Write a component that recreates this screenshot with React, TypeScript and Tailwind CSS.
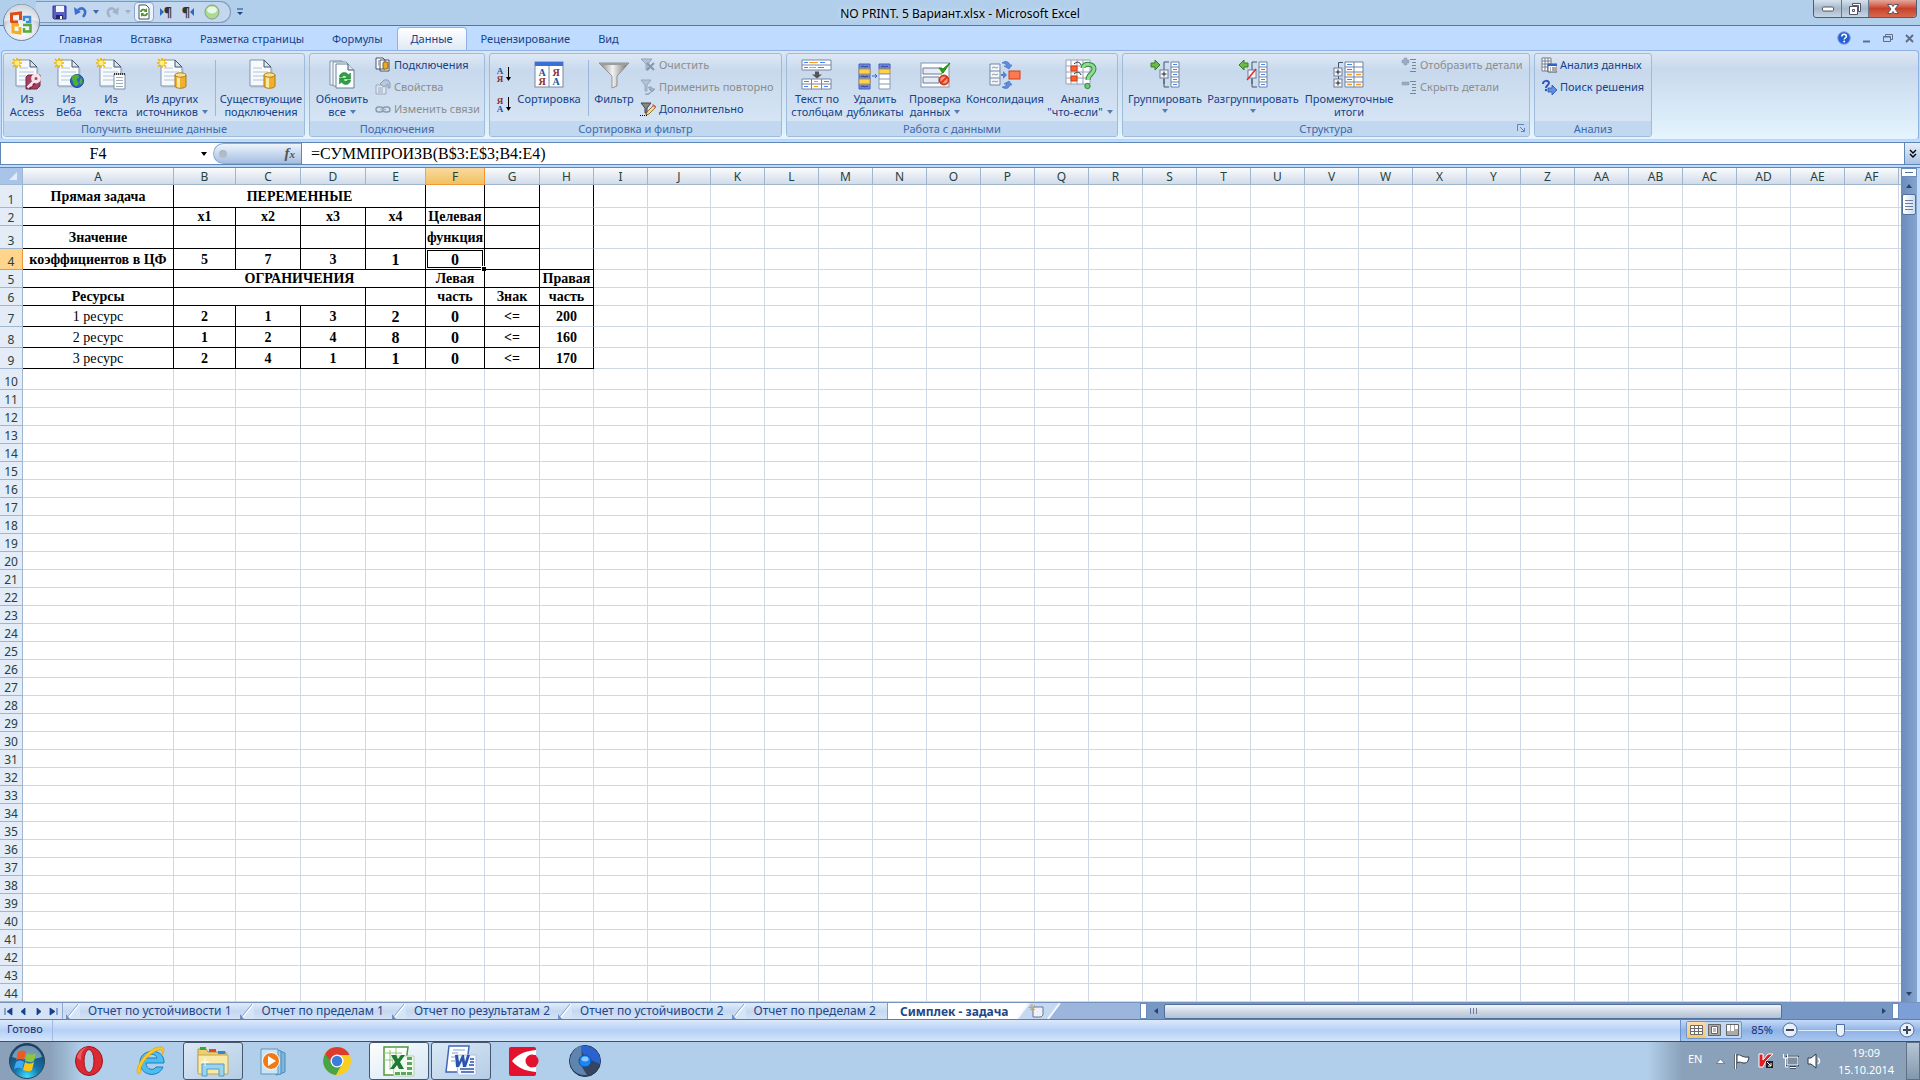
import React from 'react';
import clsx from 'clsx';

interface IconProps {
    className?: string;
}

/* ---------- Shared icon pieces ---------- */

const Page = () => (
    <>
        <path d="M6 4h14l7 7v19H6z" fill="#f7fafd" stroke="#7f93ab" />
        <path d="M20 4v7h7z" fill="#dce6f1" stroke="#44546a" />
        <path d="M9 12h9M9 16h15M9 20h15M9 24h15" stroke="#b4c4dc" />
        <path d="M7 31h21V12" fill="none" stroke="#9fb2c9" opacity=".6" />
    </>
);

const Spark = () => (
    <g>
        <path d="M7 2v10M2 7h10M3 3l8 8M11 3l-8 8" stroke="#f0b400" strokeWidth="1.6" />
        <circle cx="7" cy="7" r="2.4" fill="#fff27a" />
    </g>
);

const Cylinder = () => (
    <g>
        <path d="M20 19v11c0 3 11 3 11 0V19z" fill="#efb02b" stroke="#b07a12" />
        <path d="M22 20v11c1 .6 2 .8 3 .8V20z" fill="#fde9a4" />
        <ellipse cx="25.5" cy="19" rx="5.5" ry="2.2" fill="#fbe08a" stroke="#b07a12" />
    </g>
);

const AccessIcon = () => (
    <svg width="34" height="34" viewBox="0 0 34 34">
        <Page />
        <Spark />
        <path d="M18 19h12v11l-3 3H16V21z" fill="#a3415f" stroke="#7c2442" />
        <path d="M24 26l-6 6" stroke="#7c2442" strokeWidth="5" />
        <circle cx="26" cy="22.5" r="3.2" fill="none" stroke="#f6e3ea" strokeWidth="3.4" />
        <path d="M23.500 25.500l-6 6M20 28l2 2" stroke="#f6e3ea" strokeWidth="2.600" />
    </svg>
);

const WebIcon = () => (
    <svg width="34" height="34" viewBox="0 0 34 34">
        <Page />
        <Spark />
        <circle cx="25" cy="25" r="6.5" fill="#2c66bd" stroke="#1d468c" />
        <path d="M20 21c2-3 6-3 7-1s-2 2-2 4 3 2 1 5-5-1-5-3-2-2-1-5zM29 22c2 1 2 5 0 6s-2-4 0-6z" fill="#4fae3c" />
    </svg>
);

const TextFileIcon = () => (
    <svg width="34" height="34" viewBox="0 0 34 34">
        <Page />
        <Spark />
        <path d="M20 18h11v15H20z" fill="#fff" stroke="#7d8ca0" />
        <path d="M20 18h11" stroke="#333" strokeWidth="2" strokeDasharray="1 1" />
        <path d="M22 21.500h7M22 24.500h7M22 27.500h7M22 30.500h7" stroke="#9fadc0" />
    </svg>
);

const SourcesIcon = () => (
    <svg width="34" height="34" viewBox="0 0 34 34">
        <Page />
        <Spark />
        <Cylinder />
    </svg>
);

const ConnectionsBigIcon = () => (
    <svg width="34" height="34" viewBox="0 0 34 34">
        <Page />
        <Cylinder />
    </svg>
);

const RefreshArrows = () => (
    <>
        <path d="M-5-1c0-5 7-6 9-2l2-2v6h-6l2-2c-2-2-4-1-4 0z" fill="#2fa043" stroke="#157a2a" strokeWidth=".5" />
        <path d="M6 2c0 5-7 6-9 2l-2 2V0h6L-1 2c2 2 4 1 4 0z" fill="#2fa043" stroke="#157a2a" strokeWidth=".5" />
    </>
);

const RefreshAllIcon = () => (
    <svg width="34" height="34" viewBox="0 0 34 34">
        <path d="M5 5h12l4 4v20H5z" fill="#f1f5fa" stroke="#7f93ab" />
        <path d="M8 6h13l4 4v20H8z" fill="#f4f8fc" stroke="#7f93ab" />
        <path d="M11 8h12l6 6v18H11z" fill="#fbfdff" stroke="#6d809a" />
        <path d="M23 8v6h6" fill="#dce6f1" stroke="#44546a" />
        <g transform="translate(19.5 22)">
            <RefreshArrows />
        </g>
    </svg>
);

const SortIcon = () => (
    <svg width="34" height="34" viewBox="0 0 34 34">
        <rect x="3" y="6" width="28" height="25" fill="#fff" stroke="#7688a5" />
        <rect x="3" y="6" width="28" height="4" fill="#3c6fd6" />
        <path d="M17 10v21" stroke="#7688a5" />
        <g fontFamily="Liberation Serif" fontSize="10" fontWeight="bold" textAnchor="middle">
            <text x="10" y="20" fill="#25539c">А</text>
            <text x="10" y="29" fill="#8b2c34">Я</text>
            <text x="24" y="20" fill="#8b2c34">Я</text>
            <text x="24" y="29" fill="#25539c">А</text>
        </g>
    </svg>
);

const SortLetters: React.FC<{ reverse?: boolean }> = ({ reverse = false }) => (
    <svg width="18" height="20" viewBox="0 0 18 20">
        <g fontFamily="Liberation Serif" fontSize="9" fontWeight="bold" textAnchor="middle">
            <text x="5" y="10" fill={reverse ? '#8b2c34' : '#25539c'}>{reverse ? 'Я' : 'А'}</text>
            <text x="5" y="18" fill={reverse ? '#25539c' : '#8b2c34'}>{reverse ? 'А' : 'Я'}</text>
        </g>
        <path d="M13.500 3v11" stroke="#000" />
        <path d="M11 13h5l-2.500 4z" fill="#000" />
    </svg>
);

const FilterIcon = () => (
    <svg width="34" height="34" viewBox="0 0 34 34">
        <defs>
            <linearGradient id="funnel">
                <stop offset="0" stopColor="#7e7e7e" />
                <stop offset=".45" stopColor="#f2f2f2" />
                <stop offset="1" stopColor="#6c6c6c" />
            </linearGradient>
        </defs>
        <path d="M2 7h30L20 20v10l-5 2V20z" fill="url(#funnel)" stroke="#777" strokeWidth=".7" />
        <path d="M2 7h30l-2 2H4z" fill="#9c9c9c" />
    </svg>
);

const TextColumnsIcon = () => (
    <svg width="34" height="34" viewBox="0 0 34 34">
        <path d="M2 4h29v10H2zM2 9h29" fill="#fff" stroke="#7486a2" />
        <path d="M4 6.500h4M20 6.500h5M4 11.500h4M18 11.500h6" stroke="#4a86f0" />
        <path d="M9 6.500h9M9 11.500h7" stroke="#ff9a1f" />
        <path d="M15 15.500h4v3h3l-5 4-5-4h3z" fill="#555" />
        <path d="M2 23h29v10H2zM2 28h29M11.500 23v10M21.500 23v10" fill="#fff" stroke="#7486a2" />
        <path d="M4 25.500h5M24 25.500h5M4 30.500h4M24 30.500h4" stroke="#4a86f0" />
        <path d="M14 25.500h4M14 30.500h4" stroke="#ff9a1f" />
    </svg>
);

const DuplicatesIcon = () => (
    <svg width="34" height="34" viewBox="0 0 34 34">
        <path d="M1 8h11v25H1zM21 8h11v5H21z" fill="#6f8be0" stroke="#4560b8" />
        <path d="M1 13h11v5H1zM1 23h11v5H1zM21 13h11v5H21z" fill="#ffd24a" stroke="#b9963c" />
        <path d="M21 18h11v15H21zM21 23h11M21 28h11" fill="#fff" stroke="#8899b5" />
        <path d="M3 11l2-1 2 1 2-1 1 1M3 21l2-1 2 1 2-1 1 1M3 31l2-1 2 1 2-1 1 1M23 11l2-1 2 1 2-1 1 1" fill="none" stroke="#2b3f94" />
        <path d="M14 20h4M17 18l2 2-2 2" fill="none" stroke="#3566c9" />
    </svg>
);

const ValidationIcon = () => (
    <svg width="34" height="34" viewBox="0 0 34 34">
        <rect x="3" y="7" width="28" height="24" fill="#fbfcfe" stroke="#8494ab" />
        <path d="M5 12h19v6H5zM5 21h16v6H5z" fill="#e6ebf5" stroke="#6c7c97" />
        <path d="M21 12l4 5 7-10-7 6z" fill="#2aa313" stroke="#1d8a0c" />
        <circle cx="26" cy="24" r="4.500" fill="#ff9b85" stroke="#d6381b" strokeWidth="1.800" />
        <path d="M23 27l6-6" stroke="#d6381b" strokeWidth="1.800" />
    </svg>
);

const ConsolidateIcon = () => (
    <svg width="34" height="34" viewBox="0 0 34 34">
        <path d="M2 8h10v21H2zM2 15h10M2 22h10" fill="#f3f6fb" stroke="#7486a2" />
        <path d="M4 12l2-1 2 1 2-1M4 19l2-1 2 1 2-1M4 26l2-1 2 1 2-1" fill="none" stroke="#8a98ae" />
        <rect x="21" y="15" width="11" height="8" fill="#ff7a52" stroke="#d03c17" />
        <path d="M13 18h2v-3l4 4-4 4v-3h-2z" fill="#4e83dc" />
        <path d="M14 7c4-3 7-1 8 2h2l-3 4-5-3h3c-1-2-3-3-5-3zM14 31c4 3 7 1 8-2h2l-3-4-5 3h3c-1 2-3 3-5 3z" fill="#5d8ce0" stroke="#3c68bd" strokeWidth=".6" />
    </svg>
);

const WhatIfIcon = () => (
    <svg width="34" height="34" viewBox="0 0 34 34">
        <path d="M3 4h24v24H3zM8 4v24M14 4v24M20 4v24M3 10h24M3 16h24M3 22h24" fill="#fdfdff" stroke="#96a3b8" />
        <path d="M8 10h6v5H8zM8 20h6v5H8z" fill="#ff6030" stroke="#cc3c12" />
        <path d="M11 8c3-3 6-2 7 1M11 18c3-3 6-2 7 1" fill="none" stroke="#333" />
        <path d="M20 12c0-5 11-5 11 1 0 5-6 5-6 11" fill="none" stroke="#2c8a3d" strokeWidth="5" />
        <path d="M20 12c0-5 11-5 11 1 0 5-6 5-6 11" fill="none" stroke="#8fdc90" strokeWidth="3" />
        <circle cx="24.500" cy="30" r="2.700" fill="#6cc76f" stroke="#2c8a3d" />
    </svg>
);

const GroupIcon: React.FC<{ ungroup?: boolean }> = ({ ungroup = false }) => (
    <svg width="34" height="34" viewBox="0 0 34 34">
        <path d="M23 6h8v25h-8zM23 11h8M23 16h8M23 21h8M23 26h8" fill="#fff" stroke="#6f81a0" />
        <path d="M25 8.500h4M25 13.500h4M25 18.500h4M25 23.500h4M25 28.500h4" stroke="#4a86f0" />
        <path d="M21 6h-5v22M21 31h-5v-8" fill="none" stroke="#44546a" />
        <rect x="12" y="14" width="8" height="8" fill="#f3f6fa" stroke="#6c7c97" />
        {ungroup ? (
            <>
                <path d="M11 24l9-11" stroke="#e22b2b" strokeWidth="1.500" />
                <path d="M3 9l5-5v3h4v4H8v3z" fill="#6cba4c" stroke="#35801d" />
            </>
        ) : (
            <>
                <path d="M13.500 18h5M16 15.500v5" stroke="#222" />
                <path d="M12 9L7 4v3H3v4h4v3z" fill="#6cba4c" stroke="#35801d" />
            </>
        )}
    </svg>
);

const SubtotalIcon = () => (
    <svg width="34" height="34" viewBox="0 0 34 34">
        <path d="M13 6h18v25H13zM22 6v25M13 11h18M13 16h18M13 21h18M13 26h18" fill="#fff" stroke="#6f81a0" />
        <path d="M15 8.500h5M15 13.500h5M15 23.500h5" stroke="#4a86f0" />
        <path d="M15 18.500h5M24 18.500h5M15 28.500h5M24 28.500h5" stroke="#ff9a1f" strokeWidth="1.500" />
        <path d="M11 6.500H6.500V31" fill="none" stroke="#44546a" />
        <rect x="2" y="12" width="8" height="8" fill="#f3f6fa" stroke="#6c7c97" />
        <rect x="2" y="23" width="8" height="8" fill="#f3f6fa" stroke="#6c7c97" />
        <path d="M3.500 16h5M6 13.500v5M3.500 27h5M6 24.500v5" stroke="#222" />
    </svg>
);

/* ---------- 16px icons ---------- */

const LinkDocIcon = () => (
    <svg width="16" height="16" viewBox="0 0 16 16">
        <path d="M1 1h7l2 2v9H1zM5 3h9v11H5z" fill="#fff" stroke="#44546a" />
        <rect x="8" y="5" width="5" height="7" rx="1" fill="#e9a92b" stroke="#8b6310" />
        <path d="M3 4h1M3 6h1M3 8h1" stroke="#5d7fb8" />
    </svg>
);

const PropertiesIcon = () => (
    <svg width="16" height="16" viewBox="0 0 16 16">
        <path d="M1 6h10v9H1z" fill="#dfe7f2" stroke="#9aa8bc" />
        <path d="M3 9h5M3 11h5M3 13h5" stroke="#9aa8bc" />
        <path d="M5 5l4-4h4l2 3v5h-2V5l-4 3z" fill="#b9c8dd" stroke="#8e9db3" />
    </svg>
);

const EditLinksIcon = () => (
    <svg width="16" height="16" viewBox="0 0 16 16">
        <rect x="1" y="6" width="7" height="5" rx="2.500" fill="none" stroke="#8d9bb2" strokeWidth="1.500" />
        <rect x="8" y="6" width="7" height="5" rx="2.500" fill="none" stroke="#8d9bb2" strokeWidth="1.500" />
        <path d="M5 8.500h6" stroke="#a9b6ca" strokeWidth="1.500" />
    </svg>
);

const ClearIcon = () => (
    <svg width="16" height="16" viewBox="0 0 16 16">
        <path d="M1 2h11L8 7v6H6V7z" fill="#b5c2d6" stroke="#96a5bc" />
        <path d="M7 6l7 7M14 6l-7 7" stroke="#8796b2" strokeWidth="2" />
    </svg>
);

const ReapplyIcon = () => (
    <svg width="16" height="16" viewBox="0 0 16 16">
        <path d="M1 1h10L7 6v6H5V6z" fill="#b5c2d6" stroke="#96a5bc" />
        <path d="M8 9c2-2 4-1 5 1h2l-3 3-3-3h2M5 15c3 1 5 0 6-2" fill="#9fb0cc" stroke="#8c9cb8" />
    </svg>
);

const AdvancedIcon = () => (
    <svg width="16" height="16" viewBox="0 0 16 16">
        <path d="M1 2h10L7 7v5H5V7z" fill="#888" stroke="#444" />
        <path d="M14 4l2 2-7 7-3 1 1-3z" fill="#f7d98c" stroke="#7d5a1c" strokeWidth=".8" />
        <path d="M13 3l3 3-1 1-3-3z" fill="#d9655c" />
        <path d="M0 14.500h7" stroke="#000" strokeDasharray="1 1" />
    </svg>
);

const DetailIcon: React.FC<{ plus?: boolean }> = ({ plus = false }) => (
    <svg width="16" height="16" viewBox="0 0 16 16">
        <path d="M9 2.500h6M11 5.500h4M11 8.500h4M11 11.500h4M9 14.500h6" stroke="#77859c" />
        <path d={plus ? 'M3 1h3v2h2v3H6v2H3V6H1V3h2z' : 'M1 3h7v3H1z'} fill="#9babc4" stroke="#8999b3" strokeWidth=".5" />
    </svg>
);

const DataAnalysisIcon = () => (
    <svg width="16" height="16" viewBox="0 0 16 16">
        <path d="M1 1h9v13H1zM4 1v13M7 1v13M1 4h9M1 7h9M1 10h9" fill="#fff" stroke="#707c8f" />
        <path d="M7 7h9v8H7z" fill="#fff" stroke="#44546a" />
        <path d="M7 8h9" stroke="#2f62c9" strokeWidth="2" />
        <path d="M9 11h1M11 11h4M9 13h1M11 13h4" stroke="#555" />
    </svg>
);

const SolverIcon = () => (
    <svg width="16" height="16" viewBox="0 0 16 16">
        <path d="M2 5c0-4 6-4 6-1 0 2-3 2-3 5" fill="none" stroke="#2c55c0" strokeWidth="2" />
        <circle cx="5" cy="11" r="1.200" fill="#2c55c0" />
        <path d="M7 9h4V6l5 5-5 5v-3H7z" fill="#5f8fe6" stroke="#2a50a8" strokeWidth=".8" />
    </svg>
);

const Arrow: React.FC<IconProps> = ({ className }) => (
    <svg width="6" height="4" viewBox="0 0 6 4" className={clsx('inline-block', className)}>
        <path d="M0 0h6L3 4z" fill="currentColor" />
    </svg>
);

/* ---------- Title bar ---------- */

const OfficeButton = () => (
    <button aria-label="Office" className="absolute left-[2px] top-[3px] z-10">
        <svg width="40" height="40" viewBox="0 0 40 40">
            <defs>
                <radialGradient id="orb" cx=".5" cy=".75" r=".7">
                    <stop offset="0" stopColor="#ffffff" />
                    <stop offset=".6" stopColor="#dde2ea" />
                    <stop offset="1" stopColor="#9aa7ba" />
                </radialGradient>
            </defs>
            <circle cx="19.500" cy="19.500" r="18" fill="url(#orb)" stroke="#6f83a0" />
            <path d="M2 19a17.500 17.500 0 0 1 35 0c-8-4-27-4-35 0z" fill="#fff" opacity=".55" />
            <g fill="none" strokeWidth="3">
                <path d="M16 19h-5.500a1 1 0 0 1-1-1v-7l9-1v7" stroke="#dc4a16" />
                <path d="M22 18v-4h6v5h-4" stroke="#3d8ad6" strokeWidth="2.500" />
                <path d="M17 22h-6v7l7 1v-6" stroke="#f5ad1c" />
                <path d="M21 22h7.500v6.500H22V25" stroke="#58a83a" strokeWidth="2.500" />
            </g>
        </svg>
    </button>
);

const QuickAccess = () => (
    <div className="flex h-6 items-center pl-9">
        <div className="flex h-[22px] items-center rounded-r-full border border-l-0 border-[#7f98b8] bg-[#c3d8ee] pl-4 pr-2 text-[#3f68a5]">
            <button aria-label="Сохранить" className="w-4">
                <svg width="15" height="15" viewBox="0 0 15 15">
                    <path d="M1 1h13v13H2l-1-1z" fill="#5a5fc4" stroke="#2f3490" />
                    <path d="M4 1h8v6H4z" fill="#f2f5ff" />
                    <path d="M4 10h7v4H4z" fill="#222a66" />
                    <path d="M8 11h2v3H8z" fill="#fff" />
                </svg>
            </button>
            <button aria-label="Отменить" className="ml-1.5 w-4">
                <svg width="14" height="14" viewBox="0 0 14 14">
                    <path d="M4 5c5-4 10 1 5 7" fill="none" stroke="#3a6fd0" strokeWidth="2.600" />
                    <path d="M0 2l1 8 6-3z" fill="#3a6fd0" />
                </svg>
            </button>
            <button aria-label="Список отмены" className="flex w-3 justify-center"><Arrow /></button>
            <button aria-label="Вернуть" className="flex w-5 justify-center">
                <svg width="14" height="14" viewBox="0 0 14 14">
                    <path d="M10 5C5 1 0 6 5 12" fill="none" stroke="#a3b2c8" strokeWidth="2.600" />
                    <path d="M14 2l-1 8-6-3z" fill="#a3b2c8" />
                </svg>
            </button>
            <button aria-label="Список возврата" className="flex w-3 justify-center text-[#a0b0c6]"><Arrow /></button>
            <button aria-label="Обновить" className="flex h-5 w-5 items-center justify-center rounded-sm border border-[#8aa6cc] bg-[#eaf2fb]">
                <svg width="14" height="16" viewBox="0 0 14 16">
                    <path d="M2 1h7l3 3v11H2z" fill="#fff" stroke="#44546a" />
                    <path d="M4 8c0-3 4-3 5-1M10 9c0 3-4 3-5 1" fill="none" stroke="#4a9b20" strokeWidth="1.800" />
                    <path d="M10 4v4H7zM4 13V9h3z" fill="#4a9b20" />
                </svg>
            </button>
            <button aria-label="Слева направо" className="flex w-6 items-center justify-center text-[13px] font-bold leading-4 text-[#333]">
                <svg width="4" height="8" viewBox="0 0 4 8"><path d="M0 0l4 4-4 4z" fill="#2d68c0" /></svg>
                ¶
            </button>
            <button aria-label="Справа налево" className="flex w-5 items-center justify-center text-[13px] font-bold leading-4 text-[#333]">
                ¶
                <svg width="4" height="8" viewBox="0 0 4 8"><path d="M4 0L0 4l4 4z" fill="#2d68c0" /></svg>
            </button>
            <button aria-label="Фигура" className="ml-1 flex w-5 justify-center">
                <svg width="16" height="16" viewBox="0 0 16 16">
                    <circle cx="8" cy="8" r="7" fill="#a8dc93" stroke="#8a9a88" />
                    <ellipse cx="8" cy="6" rx="5" ry="3.500" fill="#e9f8e2" />
                </svg>
            </button>
        </div>
        <button aria-label="Настройка панели" className="ml-1.5 text-[#1f4788]">
            <svg width="6" height="8" viewBox="0 0 6 8">
                <path d="M0 1h6" stroke="currentColor" />
                <path d="M0 4h6L3 7z" fill="currentColor" />
            </svg>
        </button>
    </div>
);

const TitleBar = () => (
    <header className="grid h-[26px] grid-cols-[1fr_auto_1fr] items-start border-b border-[#55789c] bg-[#b1ceea]">
        <QuickAccess />
        <h1 className="pt-1 text-[12px] leading-5 text-black [text-shadow:0_0_6px_#fff]">NO PRINT. 5 Вариант.xlsx - Microsoft Excel</h1>
        <div className="mr-[3px] flex h-[18px] justify-self-end overflow-hidden rounded-b-[4px] border border-t-0 border-[#4d5d70]">
            <button aria-label="Свернуть" className="flex w-[28px] items-center justify-center border-r border-[#66788d] bg-linear-to-b from-[#d6e2ee] via-[#a8b8ca] to-[#c6d5e4]">
                <svg width="12" height="6" viewBox="0 0 12 6"><rect x=".5" y="1" width="11" height="4" rx="1" fill="#fff" stroke="#535666" /></svg>
            </button>
            <button aria-label="Восстановить" className="flex w-[27px] items-center justify-center border-r border-[#66788d] bg-linear-to-b from-[#d6e2ee] via-[#a8b8ca] to-[#c6d5e4]">
                <svg width="12" height="12" viewBox="0 0 12 12">
                    <path d="M3.500.5h8v8h-2v-6h-6z" fill="#fff" stroke="#535666" />
                    <path d="M.5 3.500h8v8h-8zM3.500 6.500h2v2h-2z" fill="#fff" stroke="#535666" />
                </svg>
            </button>
            <button aria-label="Закрыть" className="flex w-[47px] items-center justify-center bg-linear-to-b from-[#e4a79c] via-[#c8402a] to-[#d66a4c]">
                <svg width="12" height="10" viewBox="0 0 12 10">
                    <path d="M.5.5h4L6 2.500 7.500.5h4L8 5l3.500 4.500h-4L6 7.500 4.500 9.500h-4L4 5z" fill="#fff" stroke="#535666" />
                </svg>
            </button>
        </div>
    </header>
);

/* ---------- Ribbon ---------- */

const TABS = ['Главная', 'Вставка', 'Разметка страницы', 'Формулы', 'Данные', 'Рецензирование', 'Вид'];

const TabRow = () => (
    <nav className="flex h-[24px] items-end bg-[#bfdbff] pl-[45px] text-[11px] leading-4 text-[#15428b]">
        {TABS.map((tab) => (
            <button
                key={tab}
                className={clsx(
                    'h-[23px] rounded-t-[4px] px-[13px]',
                    tab === 'Данные'
                        ? 'border border-b-0 border-[#8db2e3] bg-linear-to-b from-white to-[#dfe9f5]'
                        : 'border border-b-0 border-transparent'
                )}
            >
                {tab}
            </button>
        ))}
        <div className="ml-auto flex h-full items-center gap-3 pr-[6px] text-[#5f6f86]">
            <button aria-label="Справка">
                <svg width="14" height="14" viewBox="0 0 14 14">
                    <circle cx="7" cy="7" r="6.300" fill="#2460d4" stroke="#8aa5d8" />
                    <path d="M4.800 5.500c0-3 4.600-3 4.600 0 0 1.500-2.200 1.500-2.200 3" fill="none" stroke="#fff" strokeWidth="1.500" />
                    <circle cx="7.200" cy="10.500" r="1" fill="#fff" />
                </svg>
            </button>
            <button aria-label="Свернуть книгу">
                <svg width="8" height="10" viewBox="0 0 8 10"><path d="M0 8.500h7" stroke="currentColor" strokeWidth="2" /></svg>
            </button>
            <button aria-label="Восстановить книгу">
                <svg width="10" height="8" viewBox="0 0 10 8">
                    <path d="M2.500 2V.5h7v5H8M.5 2.500h7v5h-7z" fill="none" stroke="currentColor" />
                    <path d="M0 3h8" stroke="currentColor" />
                </svg>
            </button>
            <button aria-label="Закрыть книгу">
                <svg width="9" height="9" viewBox="0 0 9 9"><path d="M1 1l7 7M8 1L1 8" stroke="currentColor" strokeWidth="2" /></svg>
            </button>
        </div>
    </nav>
);

interface BigButtonProps {
    icon: React.ReactNode;
    lines: string[];
    width: string;
    arrow?: boolean;
}

const BigButton: React.FC<BigButtonProps> = ({ icon, lines, width, arrow = false }) => (
    <button className={clsx('flex shrink-0 flex-col items-center whitespace-nowrap pt-[2px]', width)}>
        {icon}
        <span className="mt-[2px] leading-[13px]">{lines[0]}</span>
        <span className="flex items-center gap-1 leading-[13px]">
            {lines[1]}
            {arrow && <Arrow className={clsx('text-[#567db1]', !lines[1] && 'mt-1')} />}
        </span>
    </button>
);

interface SmallButtonProps {
    icon: React.ReactNode;
    label: string;
    disabled?: boolean;
}

const SmallButton: React.FC<SmallButtonProps> = ({ icon, label, disabled = false }) => (
    <button disabled={disabled} className={clsx('flex h-[22px] items-center gap-[3px] whitespace-nowrap', disabled && 'text-[#8d8d8d]')}>
        {icon}
        {label}
    </button>
);

const Separator = () => <div className="mx-[3px] mt-[6px] h-[56px] w-px shrink-0 bg-[#9ab6d9]" />;

interface GroupProps {
    title: string;
    width: string;
    launcher?: boolean;
    children: React.ReactNode;
}

const Group: React.FC<GroupProps> = ({ title, width, launcher = false, children }) => (
    <section
        className={clsx(
            'flex shrink-0 flex-col overflow-hidden rounded-[3px] border border-[#9ebbdc] bg-linear-to-b from-[#dee8f5] from-0% via-[#c8d9ed] via-20% to-[#d9e8f6]',
            width
        )}
    >
        <div className="flex h-[67px] px-[2px]">{children}</div>
        <div className="relative h-[15px] bg-[#c1d8f0] text-center leading-4 text-[#3e6aaa]">
            {title}
            {launcher && (
                <svg width="8" height="8" viewBox="0 0 8 8" className="absolute right-1 top-[3px]">
                    <path d="M.5 7V.5H7M3 3l4 4M7.500 4v3.500H4" fill="none" stroke="#5f86b8" />
                </svg>
            )}
        </div>
    </section>
);

const Ribbon = () => (
    <div className="bg-[#bfdbff] px-[1px] pb-[2px]">
        <div className="flex h-[90px] gap-[4px] rounded-[4px] border border-[#8db2e3] border-b-[#a5e0ee] bg-linear-to-b from-[#dde7f3] from-0% via-[#c8d9ed] via-20% to-[#e4f5fe] px-[1px] py-[2px] text-[11px] text-[#15428b]">
            <Group title="Получить внешние данные" width="w-[302px]">
                <BigButton icon={<AccessIcon />} lines={['Из', 'Access']} width="w-[42px]" />
                <BigButton icon={<WebIcon />} lines={['Из', 'Веба']} width="w-[42px]" />
                <BigButton icon={<TextFileIcon />} lines={['Из', 'текста']} width="w-[42px]" />
                <BigButton icon={<SourcesIcon />} lines={['Из других', 'источников']} width="w-[80px]" arrow />
                <Separator />
                <BigButton icon={<ConnectionsBigIcon />} lines={['Существующие', 'подключения']} width="w-[84px]" />
            </Group>
            <Group title="Подключения" width="w-[176px]">
                <BigButton icon={<RefreshAllIcon />} lines={['Обновить', 'все']} width="w-[60px]" arrow />
                <div className="pl-[3px]">
                    <SmallButton icon={<LinkDocIcon />} label="Подключения" />
                    <SmallButton icon={<PropertiesIcon />} label="Свойства" disabled />
                    <SmallButton icon={<EditLinksIcon />} label="Изменить связи" disabled />
                </div>
            </Group>
            <Group title="Сортировка и фильтр" width="w-[293px]">
                <div className="flex flex-col gap-[10px] pl-[3px] pt-[10px]">
                    <button aria-label="Сортировка от А до Я"><SortLetters /></button>
                    <button aria-label="Сортировка от Я до А"><SortLetters reverse /></button>
                </div>
                <BigButton icon={<SortIcon />} lines={['Сортировка']} width="w-[72px]" />
                <Separator />
                <BigButton icon={<FilterIcon />} lines={['Фильтр']} width="w-[44px]" />
                <div className="pl-[4px]">
                    <SmallButton icon={<ClearIcon />} label="Очистить" disabled />
                    <SmallButton icon={<ReapplyIcon />} label="Применить повторно" disabled />
                    <SmallButton icon={<AdvancedIcon />} label="Дополнительно" />
                </div>
            </Group>
            <Group title="Работа с данными" width="w-[332px]">
                <BigButton icon={<TextColumnsIcon />} lines={['Текст по', 'столбцам']} width="w-[56px]" />
                <BigButton icon={<DuplicatesIcon />} lines={['Удалить', 'дубликаты']} width="w-[60px]" />
                <BigButton icon={<ValidationIcon />} lines={['Проверка', 'данных']} width="w-[60px]" arrow />
                <BigButton icon={<ConsolidateIcon />} lines={['Консолидация']} width="w-[80px]" />
                <BigButton icon={<WhatIfIcon />} lines={['Анализ', '"что-если"']} width="w-[70px]" arrow />
            </Group>
            <Group title="Структура" width="w-[408px]" launcher>
                <BigButton icon={<GroupIcon />} lines={['Группировать', '']} width="w-[80px]" arrow />
                <BigButton icon={<GroupIcon ungroup />} lines={['Разгруппировать', '']} width="w-[96px]" arrow />
                <BigButton icon={<SubtotalIcon />} lines={['Промежуточные', 'итоги']} width="w-[96px]" />
                <div className="pl-[4px]">
                    <SmallButton icon={<DetailIcon plus />} label="Отобразить детали" disabled />
                    <SmallButton icon={<DetailIcon />} label="Скрыть детали" disabled />
                </div>
            </Group>
            <Group title="Анализ" width="w-[118px]">
                <div className="pl-[4px]">
                    <SmallButton icon={<DataAnalysisIcon />} label="Анализ данных" />
                    <SmallButton icon={<SolverIcon />} label="Поиск решения" />
                </div>
            </Group>
        </div>
    </div>
);

/* ---------- Formula bar ---------- */

const FormulaBar = () => (
    <div className="flex h-[23px] items-stretch border-y border-[#5f86b4] bg-white font-['Liberation_Serif',serif] text-[16px] text-black">
        <input aria-label="Имя" defaultValue="F4" className="w-[195px] border-l border-[#5f86b4] text-center outline-none" />
        <button aria-label="Список имён" className="flex w-[18px] items-center justify-center text-black">
            <Arrow />
        </button>
        <div className="flex w-[88px] items-center justify-between rounded-l-full border border-r-0 border-[#8eaad0] bg-linear-to-b from-[#eef4fb] to-[#a4bfe2] pl-[5px] pr-[6px]">
            <span className="h-2 w-2 rounded-full bg-[#b5bfcc] shadow-inner" />
            <button aria-label="Вставить функцию" className="text-[15px] font-bold italic leading-4 text-[#555]">
                f<span className="text-[11px]">x</span>
            </button>
        </div>
        <input
            aria-label="Строка формул"
            defaultValue="=СУММПРОИЗВ(B$3:E$3;B4:E4)"
            className="min-w-0 flex-1 border-l border-[#5f86b4] pl-[9px] outline-none"
        />
        <button aria-label="Развернуть строку формул" className="flex w-[16px] items-center justify-center border-l border-[#5f86b4] bg-linear-to-b from-[#e6effa] to-[#a9c3e6]">
            <svg width="8" height="9" viewBox="0 0 8 9">
                <path d="M1 1l3 3 3-3M1 5l3 3 3-3" fill="none" stroke="#000" strokeWidth="1.400" />
            </svg>
        </button>
    </div>
);

/* ---------- Sheet ---------- */

interface Cell {
    text?: string;
    span?: number;
    /** Black edges: r = right, b = bottom */
    edges?: string;
    plain?: boolean;
    top?: boolean;
    large?: boolean;
}

const COLUMNS = [
    'A', 'B', 'C', 'D', 'E', 'F', 'G', 'H', 'I', 'J', 'K', 'L', 'M', 'N', 'O', 'P', 'Q', 'R', 'S', 'T', 'U',
    'V', 'W', 'X', 'Y', 'Z', 'AA', 'AB', 'AC', 'AD', 'AE', 'AF',
];

const COLUMN_WIDTHS: Record<string, string> = {
    A: 'w-[151px]',
    B: 'w-[62px]',
    C: 'w-[65px]',
    D: 'w-[65px]',
    E: 'w-[60px]',
    F: 'w-[59px]',
    G: 'w-[55px]',
    J: 'w-[63px]',
};

const c = (text = '', edges = 'rb', extra: Partial<Cell> = {}): Cell => ({ text, edges, ...extra });
const big = (text: string): Cell => c(text, 'rb', { large: true });

const ROWS: Cell[][] = [
    [c('Прямая задача'), c('ПЕРЕМЕННЫЕ', 'rb', { span: 4 }), c(), c(), c('', 'r')],
    [c(), c('x1'), c('x2'), c('x3'), c('x4'), c('Целевая'), c(), c('', 'r')],
    [c('Значение'), c(), c(), c(), c(), c('функция'), c(), c('', 'r')],
    [c('коэффициентов в ЦФ'), c('5'), c('7'), c('3'), big('1'), big('0'), c(), c('', 'r')],
    [c(), c('ОГРАНИЧЕНИЯ', 'rb', { span: 4, top: true }), c('Левая'), c(), c('Правая')],
    [c('Ресурсы'), c('', 'rb', { span: 3 }), c(), c('часть'), c('Знак'), c('часть')],
    [c('1 ресурс', 'rb', { plain: true }), c('2'), c('1'), c('3'), big('2'), big('0'), c('<='), c('200', 'r')],
    [c('2 ресурс', 'rb', { plain: true }), c('1'), c('2'), c('4'), big('8'), big('0'), c('<='), c('160', 'r')],
    [c('3 ресурс', 'rb', { plain: true }), c('2'), c('4'), c('1'), big('1'), big('0'), c('<='), c('170')],
];

// The bottom edge of H4 closes the block above "Правая часть"
ROWS[3][7].edges = 'rb';

const ROW_HEIGHTS = ['h-[23px]', 'h-[18px]', 'h-[23px]', 'h-[21px]', 'h-[18px]', 'h-[18px]', 'h-[21px]', 'h-[21px]', 'h-[21px]', 'h-[21px]'];

const ROW_COUNT = 44;

const SheetCell: React.FC<{ cell: Cell; selected: boolean }> = ({ cell, selected }) => {
    const edges = cell.edges ?? '';
    return (
        <td
            colSpan={cell.span}
            className={clsx(
                'relative overflow-visible whitespace-nowrap border-b border-r p-0 pt-px text-center leading-4',
                cell.top ? 'align-top' : 'align-middle',
                cell.large ? 'text-[16px]' : 'text-[14px]',
                edges.includes('r') ? 'border-r-black' : 'border-r-[#d0d7e5]',
                edges.includes('b') ? 'border-b-black' : 'border-b-[#d0d7e5]',
                !cell.plain && 'font-bold'
            )}
        >
            {cell.text}
            {selected && (
                <span className="absolute inset-px border border-black">
                    <span className="absolute -bottom-[5px] -right-[5px] h-[6px] w-[6px] border border-white bg-black" />
                </span>
            )}
        </td>
    );
};

const Sheet = () => (
    <div className="min-w-0 flex-1 overflow-hidden">
        <table className="w-full table-fixed border-separate border-spacing-0 bg-white">
            <colgroup>
                <col className="w-[23px]" />
                {COLUMNS.map((name) => (
                    <col key={name} className={COLUMN_WIDTHS[name] ?? 'w-[54px]'} />
                ))}
                <col />
            </colgroup>
            <thead>
                <tr className="h-[17px] text-[12px] leading-[14px] text-[#27413e]">
                    <th className="border-b border-r border-[#9eb6ce] bg-[#a9c4e9] p-0">
                        <svg width="10" height="10" viewBox="0 0 10 10" className="ml-auto mr-1">
                            <path d="M9 1v8H1z" fill="#e3ecf8" />
                        </svg>
                    </th>
                    {COLUMNS.map((name) => (
                        <th
                            key={name}
                            className={clsx(
                                'border-b border-r p-0 pt-[2px] font-normal',
                                name === 'F'
                                    ? 'border-[#f29536] bg-linear-to-b from-[#f9d99f] to-[#f1c15f]'
                                    : 'border-[#9eb6ce] bg-linear-to-b from-[#f9fcfd] to-[#d3dbe9]'
                            )}
                        >
                            {name}
                        </th>
                    ))}
                    <th className="border-b border-[#9eb6ce] bg-[#e4ecf7] p-0" />
                </tr>
            </thead>
            <tbody className="font-['Liberation_Serif',serif] text-black">
                {Array.from({ length: ROW_COUNT }, (_, row) => {
                    const cells = ROWS[row] ?? [];
                    const used = cells.reduce((sum, cell) => sum + (cell.span ?? 1), 0);
                    return (
                        <tr key={row} className={ROW_HEIGHTS[row] ?? 'h-[18px]'}>
                            <th
                                className={clsx(
                                    "border-b border-r p-0 align-bottom font-['Noto_Sans',sans-serif] text-[12px] font-normal leading-[15px] text-[#27413e]",
                                    row === 3 ? 'border-[#f29536] bg-[#ffd58d]' : 'border-[#9eb6ce] bg-[#e4ecf7]'
                                )}
                            >
                                {row + 1}
                            </th>
                            {cells.map((cell, index) => (
                                <SheetCell key={index} cell={cell} selected={row === 3 && index === 5} />
                            ))}
                            {COLUMNS.slice(used).map((name) => (
                                <td key={name} className="border-b border-r border-[#d0d7e5] p-0" />
                            ))}
                            <td className="border-b border-[#d0d7e5] p-0" />
                        </tr>
                    );
                })}
            </tbody>
        </table>
    </div>
);

const VerticalScroll = () => (
    <div className="mr-[3px] flex w-[16px] flex-col items-center bg-linear-to-r from-[#6a8cbc] to-[#86a4cf] text-[#2b4268]">
        <div className="flex h-[9px] w-full items-center justify-center border border-[#6a8cbc] bg-white">
            <span className="h-px w-2 bg-[#4a70a5]" />
        </div>
        <button aria-label="Вверх" className="flex h-[17px] items-center">
            <Arrow className="rotate-180" />
        </button>
        <div className="flex h-[21px] w-[14px] flex-col items-center justify-center gap-[2px] rounded-[2px] border border-[#53709b] bg-linear-to-r from-white to-[#cddcf0]">
            <span className="h-px w-2 bg-[#6a7f9f]" />
            <span className="h-px w-2 bg-[#6a7f9f]" />
            <span className="h-px w-2 bg-[#6a7f9f]" />
            <span className="h-px w-2 bg-[#6a7f9f]" />
        </div>
        <button aria-label="Вниз" className="mt-auto flex h-[17px] items-center">
            <Arrow />
        </button>
    </div>
);

/* ---------- Sheet tabs ---------- */

const SHEETS = [
    'Отчет по устойчивости 1',
    'Отчет по пределам 1',
    'Отчет по результатам 2',
    'Отчет по устойчивости 2',
    'Отчет по пределам 2',
];

const Slash = () => (
    <svg width="14" height="16" viewBox="0 0 14 16" className="shrink-0">
        <path d="M0 16L13 0h1v16z" fill="#d5e4f7" />
        <path d="M1 16L13 1" stroke="#fff" strokeWidth="2" />
        <path d="M0 16L12 1" stroke="#7f9dc7" />
        <path d="M0 11v5h4z" fill="#6f90c2" />
    </svg>
);

const NAV_PATHS = ['M1 1v7M8 1v7L3 4.500z', 'M6 1v7L2 4.500z', 'M3 1v7l4-3.500z', 'M8 1v7M1 1v7l5-3.500z'];
const NAV_LABELS = ['Первый лист', 'Предыдущий лист', 'Следующий лист', 'Последний лист'];

const SheetTabs = () => (
    <div className="flex h-[17px] items-stretch border-t border-[#7593bd] bg-[#9cb5dc] text-[#1f4788]">
        <div className="flex w-[63px] items-center gap-[6px] border-r border-[#8ea9d0] bg-[#d5e3f5] pl-[4px]">
            {NAV_PATHS.map((path, index) => (
                <button key={path} aria-label={NAV_LABELS[index]}>
                    <svg width="9" height="9" viewBox="0 0 9 9">
                        <path d={path} fill="#15428b" stroke="#15428b" strokeWidth=".8" />
                    </svg>
                </button>
            ))}
        </div>
        <div className="flex bg-linear-to-b from-[#e1ecf9] via-[#c5d8f1] to-[#d3e2f6] pl-[3px] pr-[3px] text-[12px] leading-[15px]">
            {SHEETS.map((sheet) => (
                <button key={sheet} className="flex whitespace-nowrap">
                    <Slash />
                    <span className="px-[8px]">{sheet}</span>
                </button>
            ))}
        </div>
        <button className="whitespace-nowrap border-l border-[#7f9dc7] bg-white pl-[12px] pr-[8px] text-[12px] font-bold leading-[15px]">Симплек - задача</button>
        <button aria-label="Вставить лист" className="flex">
            <svg width="44" height="16" viewBox="0 0 44 16">
                <path d="M0 0h11L0 16z" fill="#fff" />
                <path d="M12 0h31L31 16H0z" fill="#c5d8f1" />
                <path d="M0 16L12 0M31 16L43 0" stroke="#f4f8fd" strokeWidth="2" />
                <path d="M16 4h10v8l-2 2h-8z" fill="#eef2f8" stroke="#65789a" />
                <path d="M15 1v7M11.500 4.500h7M13 2l5 5M18 2l-5 5" stroke="#e8a020" />
            </svg>
        </button>
        <div className="ml-auto flex w-[780px] items-center bg-[#7797c4]">
            <span className="h-full w-[7px] border border-[#6a8cbc] bg-white" />
            <button aria-label="Влево" className="flex w-[17px] justify-center text-[#2b4268]">
                <Arrow className="rotate-90" />
            </button>
            <div className="flex h-[15px] flex-1 items-center justify-center gap-[2px] rounded-[2px] border border-[#53709b] bg-linear-to-b from-[#f3f6fa] via-[#cfd8e4] to-[#b0c2d6]">
                <span className="h-[6px] w-px bg-[#6a7f9f]" />
                <span className="h-[6px] w-px bg-[#6a7f9f]" />
                <span className="h-[6px] w-px bg-[#6a7f9f]" />
            </div>
            <span className="w-[94px]" />
            <button aria-label="Вправо" className="flex w-[16px] justify-center text-[#2b4268]">
                <Arrow className="-rotate-90" />
            </button>
            <span className="h-full w-[7px] border border-[#6a8cbc] bg-white" />
            <span className="h-full w-[21px] bg-[#7c9fd8]" />
        </div>
    </div>
);

/* ---------- Status bar ---------- */

const ZoomMark: React.FC<{ plus?: boolean }> = ({ plus = false }) => (
    <svg width="16" height="16" viewBox="0 0 16 16">
        <circle cx="8" cy="8" r="7" fill="#e8eff9" stroke="#4f6fa0" />
        <path d={plus ? 'M4 8h8M8 4v8' : 'M4 8h8'} stroke="#3b4a63" strokeWidth="2" />
    </svg>
);

const StatusBar = () => (
    <footer className="flex h-[22px] items-stretch border-t border-[#5580bc] bg-linear-to-b from-[#dce9fb] via-[#b4d0f5] to-[#d6e5fa] text-[11px] leading-[18px] text-[#15307a]">
        <span className="w-[53px] border-r border-[#9ebbe4] pl-[7px]">Готово</span>
        <div className="ml-auto flex items-center border-l border-[#6d93cc] bg-linear-to-b from-[#c4daf8] via-[#8fb3e6] to-[#a9c6ee] pb-px pl-[5px] pr-[5px]">
            <div className="flex rounded-[2px] border border-[#6d93cc] bg-[#c3d8f3]">
                <button aria-label="Обычный" className="flex w-[18px] items-center justify-center bg-linear-to-b from-[#fbdcae] to-[#f9c85a]">
                    <svg width="13" height="16" viewBox="0 0 13 16">
                        <path d="M.5 3.500h12v9H.5zM4.500 3v10M8.500 3v10M0 6.500h13M0 9.500h13" fill="#fff" stroke="#6b6b6b" />
                    </svg>
                </button>
                <button aria-label="Разметка" className="flex w-[18px] items-center justify-center">
                    <svg width="13" height="16" viewBox="0 0 13 16">
                        <path d="M.5 2.500h12v11H.5z" fill="#aaa" stroke="#666" />
                        <path d="M3.500 4.500h6v7h-6z" fill="#fff" stroke="#666" />
                        <path d="M5 7h3M5 9h3" stroke="#777" />
                    </svg>
                </button>
                <button aria-label="Страничный" className="flex w-[18px] items-center justify-center">
                    <svg width="13" height="16" viewBox="0 0 13 16">
                        <path d="M.5 2.500h12v11H.5z" fill="#aaa" stroke="#666" />
                        <path d="M1 3h3v6H1zM5 3h3v6H5z" fill="#fff" />
                        <path d="M9 3h3v4H9z" fill="#fff" />
                    </svg>
                </button>
            </div>
            <button className="w-[40px] text-center">85%</button>
            <button aria-label="Уменьшить"><ZoomMark /></button>
            <input
                type="range"
                aria-label="Масштаб"
                min={10}
                max={190}
                defaultValue={85}
                className="h-[15px] w-[101px] appearance-none bg-[linear-gradient(#dfeaf8,#dfeaf8)] bg-[length:100%_1px] bg-center bg-no-repeat [&::-webkit-slider-thumb]:h-[13px] [&::-webkit-slider-thumb]:w-[9px] [&::-webkit-slider-thumb]:appearance-none [&::-webkit-slider-thumb]:rounded-b-full [&::-webkit-slider-thumb]:border [&::-webkit-slider-thumb]:border-[#4f6fa0] [&::-webkit-slider-thumb]:bg-[#eaf1fa]"
            />
            <button aria-label="Увеличить"><ZoomMark plus /></button>
        </div>
    </footer>
);

/* ---------- Taskbar ---------- */

const StartIcon = () => (
    <svg width="38" height="38" viewBox="0 0 38 38">
        <defs>
            <radialGradient id="start" cx=".5" cy=".95" r=".9">
                <stop offset="0" stopColor="#3fe0ff" />
                <stop offset=".4" stopColor="#1577ad" />
                <stop offset="1" stopColor="#173d63" />
            </radialGradient>
        </defs>
        <circle cx="19" cy="19" r="17.500" fill="url(#start)" stroke="#28455f" />
        <path d="M4 15a15.500 15.500 0 0 1 30 0c-9 3-21 3-30 0z" fill="#cfe3f2" opacity=".5" />
        <path d="M10 10c3-2 6-2 8 0l-2 8c-3-2-5-1-8 0z" fill="#ee5a24" />
        <path d="M19 11c3 2 6 2 9 0l-2 8c-3 2-6 1-9 0z" fill="#8cc63f" />
        <path d="M8 20c3-2 5-2 8 0l-2 7c-3-2-5-1-8 0z" fill="#3fa9f5" />
        <path d="M17 20c3 2 6 2 9 0l-2 8c-3 2-6 1-9 0z" fill="#fcc419" />
    </svg>
);

const OperaIcon = () => (
    <svg width="32" height="32" viewBox="0 0 32 32">
        <ellipse cx="16" cy="16" rx="13.500" ry="14.500" fill="#dc2a33" stroke="#a3121b" />
        <ellipse cx="16" cy="16" rx="5" ry="11.500" fill="#b5cfe9" stroke="#a3121b" />
        <path d="M4 12C6 5 11 2.500 14 2 9 5 8 9 8 15c-2-1-3-1-4-3z" fill="#f27078" opacity=".7" />
    </svg>
);

const ExplorerEIcon = () => (
    <svg width="32" height="32" viewBox="0 0 32 32">
        <path d="M29 18H11c0 7 8 8 10 4h7c-4 11-23 10-23-5C5 3 30 2 29 18zM11 13h11c-1-5-10-5-11 0z" fill="#4dbdf0" stroke="#1c7fbf" />
        <path d="M3 29C-2 22 15 0 27 2c3 1 2 5 0 8 1-4 0-6-3-5C15 7 4 20 6 27z" fill="#fbc926" stroke="#d99b10" strokeWidth=".6" />
    </svg>
);

const FoldersIcon = () => (
    <svg width="34" height="32" viewBox="0 0 34 32">
        <path d="M2 4h8l2 3h18v20H2z" fill="#eccf72" stroke="#b9983f" />
        <path d="M4 2h6v3H4z" fill="#2fae2f" />
        <path d="M13 4h7v3h-7z" fill="#e0482c" />
        <path d="M22 6h7v3h-7z" fill="#2f86d8" />
        <path d="M2 10h30v19H2z" fill="#f9e9a9" stroke="#c4a64f" />
        <path d="M6 31V19h22v12h-5v-7H11v7z" fill="#9bd3ef" stroke="#4f9cc6" />
        <path d="M9 13v8M5 17h8" stroke="#fff" />
    </svg>
);

const MediaIcon = () => (
    <svg width="32" height="32" viewBox="0 0 32 32">
        <path d="M21 6l5 2v19l-5 2z" fill="#7db7dd" stroke="#4c8bb8" />
        <path d="M17 5l5 1v23l-5 1z" fill="#a2cfea" stroke="#4c8bb8" />
        <path d="M2 4h17v25H2z" fill="#cbe5f5" stroke="#5b97c2" />
        <circle cx="12" cy="16" r="8.500" fill="#f27a14" stroke="#fff" />
        <path d="M9 11l8 5-8 5z" fill="#fff" />
    </svg>
);

const ChromeIcon = () => (
    <svg width="32" height="32" viewBox="0 0 32 32">
        <circle cx="16" cy="16" r="14" fill="#f8cf20" />
        <path d="M16 2a14 14 0 0 1 12.500 8H16l-6.500 9.500L4 9A14 14 0 0 1 16 2z" fill="#dc3b2e" />
        <path d="M4 9a14 14 0 0 0 11 21l6-11h-9z" fill="#47a447" />
        <circle cx="16" cy="16" r="6.500" fill="#fff" />
        <circle cx="16" cy="16" r="5.200" fill="#3b7ddd" />
    </svg>
);

const ExcelIcon = () => (
    <svg width="32" height="32" viewBox="0 0 32 32">
        <path d="M1 2h24l-4 28H1z" fill="#fff" stroke="#4d9b3a" strokeWidth="1.500" />
        <path d="M7 5v20M13 3v10M1 8h18M1 15h8" stroke="#8cc77d" />
        <path d="M9 11h22v20H11z" fill="#f2f9ef" stroke="#b5cfae" />
        <path d="M24 12h5v3h-5zM24 17h5v3h-5zM24 22h5v3h-5zM24 27h5v3h-5zM18 27h5v3h-5zM12 27h5v3h-5z" fill="#5da65b" />
        <path d="M8 10h5l2 4 3-4h4l-5 7 4 7h-5l-2-4-3 4H7l5-7z" fill="#1d7a35" />
    </svg>
);

const WordIcon = () => (
    <svg width="32" height="32" viewBox="0 0 32 32">
        <path d="M4 1h20l-3 26H1z" fill="#fff" stroke="#3f66b8" strokeWidth="1.500" />
        <path d="M8 5h12M7 8h6M6 12h4M6 16h4" stroke="#7f9fdb" />
        <path d="M11 10h20v20H13z" fill="#f4f7fd" stroke="#b4c1dc" />
        <path d="M10 10h3l1 7 3-7h2l1 7 2-7h3l-4 12h-3l-1-6-3 6h-3z" fill="#2b55ad" />
        <path d="M25 14h4M25 17h4M24 20h5M15 24h14M16 27h13" stroke="#2b55ad" strokeWidth="1.500" />
    </svg>
);

const RedEyeIcon = () => (
    <svg width="32" height="32" viewBox="0 0 32 32">
        <rect x="2" y="2" width="27" height="29" rx="2" fill="#e3122f" />
        <path d="M5 16C11 9 18 6 29 5v5c-5 0-8 3-8 6s3 6 8 6v5C18 26 11 23 5 16z" fill="#fff" />
        <circle cx="25" cy="16" r="6.500" fill="#e3122f" />
    </svg>
);

const BlueBallIcon = () => (
    <svg width="34" height="34" viewBox="0 0 34 34">
        <circle cx="17" cy="17" r="15.500" fill="#35455f" stroke="#26374f" />
        <path d="M11 3A15.500 15.500 0 0 1 32 20L18 14z" fill="#2a63d0" />
        <path d="M2 15C4 7 8 3 13 2l1 12c-3 5 0 9 5 17C8 32 1 24 2 15z" fill="#5f84ae" />
        <circle cx="17" cy="17" r="6" fill="#1d86f0" stroke="#0c4fa8" />
        <ellipse cx="17" cy="15" rx="3.500" ry="2.500" fill="#8cc8ff" />
    </svg>
);

const APPS = [
    { name: 'Opera', icon: <OperaIcon /> },
    { name: 'Internet Explorer', icon: <ExplorerEIcon /> },
    { name: 'Проводник', icon: <FoldersIcon />, open: true },
    { name: 'Media Player', icon: <MediaIcon /> },
    { name: 'Chrome', icon: <ChromeIcon /> },
    { name: 'Excel', icon: <ExcelIcon />, open: true, active: true },
    { name: 'Word', icon: <WordIcon />, open: true },
    { name: 'Просмотр', icon: <RedEyeIcon /> },
    { name: 'Браузер', icon: <BlueBallIcon /> },
];

const Taskbar = () => (
    <div className="flex h-[39px] items-stretch border-t border-[#3d5068] bg-[#b1ceea] text-[11px] text-white">
        <div className="flex flex-1 gap-[2px] bg-[linear-gradient(90deg,#8aa1b9_0,#8aa1b9_50px,#b1ceea_82px)]">
            <button aria-label="Пуск" className="flex w-[57px] items-center pl-[8px]">
                <StartIcon />
            </button>
            {APPS.map((app) => (
                <button
                    key={app.name}
                    aria-label={app.name}
                    className={clsx(
                        'flex w-[60px] items-center justify-center rounded-[3px] border',
                        !app.open && 'border-transparent',
                        app.open && 'border-[#46586e]',
                        app.open && !app.active && 'bg-linear-to-br from-[#dbe8f5] to-[#b4cde6]',
                        app.active && 'bg-linear-to-br from-[#fdfefe] to-[#d5e5f3]'
                    )}
                >
                    {app.icon}
                </button>
            ))}
        </div>
        <div className="flex items-center bg-[linear-gradient(90deg,#b1ceea_0,#8aa1b9_34px)] pl-[40px]">
            <span className="w-[28px] pb-1">EN</span>
            <div className="flex items-center gap-[8px]">
                <svg width="9" height="6" viewBox="0 0 9 6"><path d="M.5 5.500L4.500 1l4 4.500z" fill="#fff" stroke="#44546a" strokeWidth=".6" /></svg>
                <svg width="17" height="17" viewBox="0 0 17 17">
                    <path d="M2.500 1v15" stroke="#2e3a49" strokeWidth="3" />
                    <path d="M4 2c4-1 5 3 12 2-1 5-2 6-5 6S7 8 4 10z" fill="#fff" stroke="#2e3a49" />
                    <path d="M2.500 1v15" stroke="#fff" strokeWidth="1.500" />
                </svg>
                <svg width="16" height="16" viewBox="0 0 16 16">
                    <path d="M1 1h4v6l5-6h5L8 8l-3 6H1z" fill="#e31c24" stroke="#fff" />
                    <path d="M8 8h7v7H8z" fill="#222" />
                    <path d="M9 9l4 4M13 10v3h-3" fill="none" stroke="#fff" />
                </svg>
                <svg width="17" height="16" viewBox="0 0 17 16">
                    <path d="M5 4h11v8H5zM8 14.500h6" fill="#6f8398" stroke="#2e3a49" strokeWidth="2.400" />
                    <path d="M5 4h11v8H5zM8 14.500h6" fill="#7c90a6" stroke="#fff" />
                    <path d="M1.500 1v4h4V1M3.500 5v9h3" fill="none" stroke="#fff" />
                </svg>
                <svg width="15" height="16" viewBox="0 0 15 16">
                    <path d="M1 5h3l5-4v14l-5-4H1z" fill="#fff" stroke="#2e3a49" />
                    <path d="M11 5c2 2 2 4 0 6M13 3" fill="none" stroke="#fff" strokeWidth="1.500" />
                </svg>
            </div>
            <div className="w-[84px] pl-1 text-center leading-[17px]">
                <div>19:09</div>
                <div>15.10.2014</div>
            </div>
            <button aria-label="Показать рабочий стол" className="h-full w-[14px] border border-[#5d7085] bg-linear-to-b from-[#b7c6d5] to-[#8298ae]" />
        </div>
    </div>
);

export default function App() {
    return (
        <div className="relative flex min-h-screen flex-col overflow-hidden bg-[#bfdbff] font-['Noto_Sans',sans-serif]">
            <OfficeButton />
            <TitleBar />
            <TabRow />
            <Ribbon />
            <FormulaBar />
            <main className="mt-[2px] flex flex-1 border-t border-[#5f86b4]">
                <Sheet />
                <VerticalScroll />
            </main>
            <SheetTabs />
            <StatusBar />
            <Taskbar />
        </div>
    );
}
